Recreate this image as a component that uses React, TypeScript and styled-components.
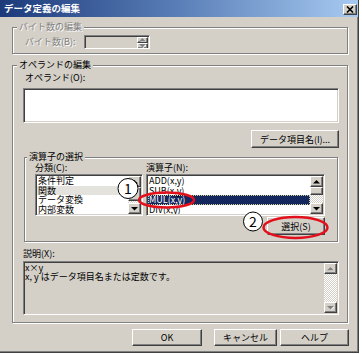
import React from "react";
import styled, { createGlobalStyle } from "styled-components";

const FONT = `"Noto Sans CJK JP", "Noto Sans", sans-serif`;

const GlobalStyle = createGlobalStyle`
  html, body { margin: 0; padding: 0; background: #ffffff; }
  body { font-family: ${FONT}; font-size: 9px; color: #000; }
  * { box-sizing: border-box; }
`;

const Window = styled.div`
  position: relative;
  width: 359px;
  height: 353px;
  background: #d4d0c8;
  border-right: 1px solid #404040;
  border-bottom: 1px solid #404040;
  box-shadow: inset -1px -1px 0 #808080;
  display: flex;
  flex-direction: column;
  overflow: hidden;
`;

const TitleBar = styled.div`
  flex: none;
  height: 17px;
  display: flex;
  align-items: flex-start;
  justify-content: space-between;
  padding: 0 1px 0 4px;
  background: linear-gradient(to right, #1c3a7a 0%, #5a7fb8 50%, #a6caf0 100%);
`;

const Title = styled.span`
  color: #fff;
  font-weight: bold;
  font-size: 9.5px;
  line-height: 17px;
  white-space: nowrap;
`;

const CloseBox = styled.div`
  margin-top: 4px;
  width: 14px;
  height: 11px;
  background: #d4d0c8;
  border: 1px solid;
  border-color: #fff #404040 #404040 #fff;
  box-shadow: inset -1px -1px 0 #808080;
  display: flex;
  align-items: center;
  justify-content: center;
`;

const Body = styled.div`
  flex: 1;
  display: flex;
  flex-direction: column;
  padding: 5px 10px 0 12px;
`;

const Frame = styled.fieldset<{ $mt?: number; $mx?: number }>`
  margin: ${(p) => p.$mt ?? 0}px ${(p) => p.$mx ?? 0}px 0;
  padding: 0;
  min-width: 0;
  border: 1px solid #808080;
  box-shadow: 1px 1px 0 #fff, inset 1px 1px 0 #fff;
`;

const Legend = styled.legend<{ $lx: number; $disabled?: boolean }>`
  margin-left: ${(p) => p.$lx}px;
  padding: 0 2px;
  font-size: 9px;
  line-height: 10px;
  background: #d4d0c8;
  color: ${(p) => (p.$disabled ? "#808080" : "#000")};
  text-shadow: ${(p) => (p.$disabled ? "1px 1px 0 #fff" : "none")};
  white-space: nowrap;
`;

const FrameBody = styled.div<{ $pad: string }>`
  display: flex;
  flex-direction: column;
  padding: ${(p) => p.$pad};
`;

const InlineRow = styled.div`
  display: flex;
  align-items: center;
`;

const Label = styled.span<{ $w?: number; $disabled?: boolean; $ml?: number; $mt?: number }>`
  display: block;
  width: ${(p) => (p.$w ? `${p.$w}px` : "auto")};
  margin-left: ${(p) => p.$ml ?? 0}px;
  margin-top: ${(p) => p.$mt ?? 0}px;
  font-size: 9px;
  line-height: 10px;
  white-space: nowrap;
  color: ${(p) => (p.$disabled ? "#808080" : "#000")};
  text-shadow: ${(p) => (p.$disabled ? "1px 1px 0 #fff" : "none")};
`;

const Sunken = styled.div<{ $h: number; $bg?: string; $mt?: number; $w?: number }>`
  height: ${(p) => p.$h}px;
  width: ${(p) => (p.$w ? `${p.$w}px` : "auto")};
  margin-top: ${(p) => p.$mt ?? 0}px;
  background: ${(p) => p.$bg ?? "#fff"};
  border: 1px solid;
  border-color: #808080 #fff #fff #808080;
  padding: 1px;
  box-shadow: inset 1px 1px 0 #404040, inset -1px -1px 0 #d4d0c8;
  display: flex;
  overflow: hidden;
`;

const SpinButtons = styled.div`
  margin-left: auto;
  width: 11px;
  display: flex;
  flex-direction: column;
`;

const RaisedCell = styled.div<{ $h?: number }>`
  height: ${(p) => (p.$h ? `${p.$h}px` : "auto")};
  flex: ${(p) => (p.$h ? "none" : "1")};
  background: #d4d0c8;
  border: 1px solid;
  border-color: #fff #404040 #404040 #fff;
  box-shadow: inset -1px -1px 0 #808080;
  display: flex;
  align-items: center;
  justify-content: center;
`;

const Track = styled.div`
  flex: 1;
  background: repeating-conic-gradient(#d4d0c8 0 25%, #ffffff 0 50%) 0 0 / 2px 2px;
`;

const ScrollCol = styled.div`
  flex: none;
  width: 13px;
  display: flex;
  flex-direction: column;
`;

const Btn = styled.button<{ $w: number; $h?: number }>`
  flex: none;
  width: ${(p) => p.$w}px;
  height: ${(p) => p.$h ?? 18}px;
  margin: 0;
  padding: 0;
  background: #d4d0c8;
  border: 1px solid;
  border-color: #fff #404040 #404040 #fff;
  box-shadow: inset -1px -1px 0 #808080;
  font-family: ${FONT};
  font-size: 9px;
  line-height: 1;
  color: #000;
  display: flex;
  align-items: center;
  justify-content: center;
  white-space: nowrap;
`;

const EndRow = styled.div<{ $mt: number }>`
  display: flex;
  justify-content: flex-end;
  margin-top: ${(p) => p.$mt}px;
`;

const ListGrid = styled.div`
  display: grid;
  grid-template-columns: 108px 179px;
  column-gap: 3px;
`;

const ListCol = styled.div`
  display: flex;
  flex-direction: column;
  gap: 1px;
`;

const Items = styled.ul`
  list-style: none;
  margin: 0;
  padding: 0;
  flex: 1;
  overflow: hidden;
`;

const Item = styled.li<{ $sel?: "active" | "inactive" }>`
  height: 9.5px;
  line-height: 9.5px;
  font-size: 9px;
  padding-left: 1px;
  white-space: nowrap;
  background: ${(p) => (p.$sel === "active" ? "#14275e" : p.$sel === "inactive" ? "#e4e2dc" : "transparent")};
  color: ${(p) => (p.$sel === "active" ? "#fff" : "#000")};
  outline: ${(p) => (p.$sel === "active" ? "1px dotted #d8d4a0" : "none")};
  outline-offset: -1px;
`;

const DescText = styled.div`
  flex: 1;
  font-size: 9px;
  line-height: 8.5px;
  padding: 1px 0 0 0;
  white-space: nowrap;
`;

const Footer = styled.div`
  display: flex;
  margin-top: 6px;
  padding-left: 120px;
`;

const Overlay = styled.svg`
  position: absolute;
  left: 0;
  top: 0;
  pointer-events: none;
`;

const Arrow = ({ dir, disabled }: { dir: "up" | "down"; disabled?: boolean }) => {
  const pts = dir === "up" ? "0,3.5 3.5,0 7,3.5" : "0,0 7,0 3.5,3.5";
  return (
    <svg width="7" height="4" viewBox="0 0 7 4">
      {disabled && <polygon points={pts} fill="#fff" transform="translate(0.8,0.5)" />}
      <polygon points={pts} fill={disabled ? "#808080" : "#000"} />
    </svg>
  );
};

const ScrollBar = ({ thumb, disabled }: { thumb?: number; disabled?: boolean }) => (
  <ScrollCol>
    <RaisedCell $h={11}>
      <Arrow dir="up" disabled={disabled} />
    </RaisedCell>
    {thumb ? <RaisedCell $h={thumb} /> : null}
    <Track />
    <RaisedCell $h={11}>
      <Arrow dir="down" disabled={disabled} />
    </RaisedCell>
  </ScrollCol>
);

export default function App() {
  return (
    <>
      <GlobalStyle />
      <Window>
        <TitleBar>
          <Title>データ定義の編集</Title>
          <CloseBox>
            <svg width="8" height="7" viewBox="0 0 8 7">
              <path d="M1 0.5 L7 6.5 M7 0.5 L1 6.5" stroke="#000" strokeWidth="1.6" />
            </svg>
          </CloseBox>
        </TitleBar>
        <Body>
          <Frame>
            <Legend $lx={4} $disabled>
              バイト数の編集
            </Legend>
            <FrameBody $pad="3px 0 4px 12px">
              <InlineRow>
                <Label $w={59} $disabled>
                  バイト数(B):
                </Label>
                <Sunken $h={14} $w={66} $bg="#d4d0c8">
                  <SpinButtons>
                    <RaisedCell>
                      <Arrow dir="up" disabled />
                    </RaisedCell>
                    <RaisedCell>
                      <Arrow dir="down" disabled />
                    </RaisedCell>
                  </SpinButtons>
                </Sunken>
              </InlineRow>
            </FrameBody>
          </Frame>

          <Frame $mt={6}>
            <Legend $lx={4}>オペランドの編集</Legend>
            <FrameBody $pad="3px 8px 7px 10px">
              <Label $ml={2}>オペランド(O):</Label>
              <Sunken $h={35} $mt={5} />
              <EndRow $mt={7}>
                <Btn $w={88}>データ項目名(I)...</Btn>
              </EndRow>
              <Frame $mt={4} $mx={1}>
                <Legend $lx={2}>演算子の選択</Legend>
                <FrameBody $pad="1px 12px 6px 10px">
                  <ListGrid>
                    <ListCol>
                      <Label>分類(C):</Label>
                      <Sunken $h={42}>
                        <Items>
                          <Item>条件判定</Item>
                          <Item $sel="inactive">関数</Item>
                          <Item>データ変換</Item>
                          <Item>内部変数</Item>
                        </Items>
                        <ScrollBar thumb={14} />
                      </Sunken>
                    </ListCol>
                    <ListCol>
                      <Label>演算子(N):</Label>
                      <Sunken $h={42}>
                        <Items>
                          <Item>ADD(x,y)</Item>
                          <Item>SUB(x,y)</Item>
                          <Item $sel="active">MUL(x,y)</Item>
                          <Item>DIV(x,y)</Item>
                        </Items>
                        <ScrollBar thumb={8} />
                      </Sunken>
                    </ListCol>
                  </ListGrid>
                  <EndRow $mt={1}>
                    <Btn $w={58}>選択(S)</Btn>
                  </EndRow>
                </FrameBody>
              </Frame>
              <Label $ml={0} $mt={7}>
                説明(X):
              </Label>
              <Sunken $h={54} $mt={2} $bg="#d4d0c8">
                <DescText>
                  x×y
                  <br />
                  x, y はデータ項目名または定数です。
                </DescText>
                <ScrollBar disabled />
              </Sunken>
            </FrameBody>
          </Frame>

          <Footer>
            <Btn $w={70} $h={17}>
              OK
            </Btn>
            <Btn $w={63} $h={17} style={{ marginLeft: 12 }}>
              キャンセル
            </Btn>
            <Btn $w={69} $h={17} style={{ marginLeft: 3 }}>
              ヘルプ
            </Btn>
          </Footer>
        </Body>

        <Overlay width="359" height="353" viewBox="0 0 359 353">
          <circle cx="128" cy="188.5" r="10" fill="#fff" stroke="#000" strokeWidth="1" />
          <text x="128" y="193.5" textAnchor="middle" fontFamily={FONT} fontSize="14" fill="#000">
            1
          </text>
          <ellipse cx="166.5" cy="200" rx="27.5" ry="7.5" fill="none" stroke="#e3101c" strokeWidth="2.5" />
          <circle cx="253" cy="221.5" r="9.5" fill="#fff" stroke="#000" strokeWidth="1" />
          <text x="253" y="226.5" textAnchor="middle" fontFamily={FONT} fontSize="14" fill="#000">
            2
          </text>
          <ellipse cx="295.5" cy="227.5" rx="32" ry="10.5" fill="none" stroke="#e3101c" strokeWidth="2.5" />
        </Overlay>
      </Window>
    </>
  );
}
